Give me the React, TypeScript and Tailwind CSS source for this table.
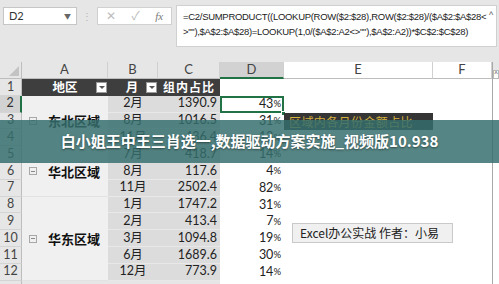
const rows = [
  { n: '2', m: '2月', v: '1390.9', p: '43' },
  { n: '3', m: '8月', v: '1016.5', p: '31' },
  { n: '4', m: '11月', v: '436.4', p: '13' },
  { n: '5', m: '7月', v: '418.7', p: '14' },
  { n: '6', m: '8月', v: '117.6', p: '4' },
  { n: '7', m: '11月', v: '2502.4', p: '82' },
  { n: '8', m: '1月', v: '1747.2', p: '31' },
  { n: '9', m: '2月', v: '413.4', p: '7' },
  { n: '10', m: '3月', v: '1094.8', p: '19' },
  { n: '11', m: '6月', v: '1689.6', p: '30' },
  { n: '12', m: '12月', v: '773.9', p: '14' },
];

const groups = [
  { name: '东北区域', h: 'h-[67.2px]', pt: 'pt-[16.8px]' },
  { name: '华北区域', h: 'h-[33.6px]', pt: 'pt-0' },
  { name: '华东区域', h: 'h-[84px]', pt: 'pt-[33.6px]' },
];

const font = "font-['Lato','Noto_Sans_CJK_SC',sans-serif]";
const cjk = "font-['Noto_Sans_CJK_SC',sans-serif]";

function ColHead({ label, w, active }: { label: string; w: string; active?: boolean }) {
  return (
    <div
      className={`${w} h-[17px] flex items-center justify-center border-r border-[#d0d0d0] text-[13px] text-[#444] ${
        active ? 'bg-[#d2d2d2] border-b-2 border-b-[#217346]' : 'border-b border-b-[#bdbdbd]'
      }`}
    >
      {label}
    </div>
  );
}

function FilterBtn() {
  return (
    <span className="absolute right-[1px] top-[3px] w-[11px] h-[11px] bg-white border border-[#9a9a9a] flex items-center justify-center">
      <span className="w-0 h-0 border-l-[3px] border-r-[3px] border-t-[3px] border-l-transparent border-r-transparent border-t-[#555]" />
    </span>
  );
}

function Minus() {
  return (
    <span className="w-[8px] h-[8px] border border-[#a8a8a8] flex items-center justify-center">
      <span className="w-[4px] h-px bg-[#888]" />
    </span>
  );
}

export default function App() {
  return (
    <div className={`relative w-[499px] h-[284px] overflow-hidden bg-[#e6e6e6] ${font}`}>
      {/* formula bar */}
      <div className="h-[62px] flex items-start pt-[5px] pl-[3px]">
        <div className="mt-[2px] w-[74px] h-[18px] bg-white border border-[#c6c6c6] flex items-center justify-between px-[5px] text-[11px] text-[#333]">
          <span>D2</span>
          <span className="text-[7px] text-[#666]">▼</span>
        </div>
        <div className="w-[20px] h-[22px] flex items-center justify-center text-[10px] text-[#b5b5b5]">⋮</div>
        <div className="mt-[2px] w-[75px] h-[18px] bg-white border border-[#d0d0d0] flex items-center justify-around text-[12px] text-[#bdbdbd]">
          <span>✕</span>
          <span>✓</span>
          <span className="font-['Liberation_Serif',serif] italic text-[#777] text-[11px]">fx</span>
        </div>
        <div className="ml-[4px] w-[321px] h-[42px] bg-white border border-[#d0d0d0] relative pl-[6px] pt-[3px] font-['Liberation_Sans',sans-serif] text-[9.5px] tracking-[-0.3px] leading-[15px] text-[#222]">
          <div>=C2/SUMPRODUCT((LOOKUP(ROW($2:$28),ROW($2:$28)/($A$2:$A$28&lt;</div>
          <div>&gt;""),$A$2:$A$28)=LOOKUP(1,0/($A$2:A2&lt;&gt;""),$A$2:A2))*$C$2:$C$28)</div>
          <span className="absolute right-[3px] top-[2px] text-[9px] text-[#555]">^</span>
        </div>
      </div>

      {/* sheet */}
      <div className="flex">
        {/* row headers */}
        <div className="w-[22px] flex flex-col">
          <div className="h-[17px] relative border-r border-b border-[#bdbdbd]">
            <span className="absolute right-[2px] bottom-[2px] w-0 h-0 border-b-[10px] border-l-[10px] border-b-[#c3c3c3] border-l-transparent" />
          </div>
          {['1', ...rows.map((r) => r.n), ''].map((n) => (
            <div
              key={n}
              className={`h-[16.8px] shrink-0 flex items-center justify-center text-[12.5px] border-b border-[#d4d4d4] ${
                n === '2' ? 'bg-[#d2d2d2] text-[#333] border-r-2 border-r-[#217346]' : 'text-[#444] border-r border-r-[#bdbdbd]'
              }`}
            >
              {n}
            </div>
          ))}
        </div>

        {/* column A */}
        <div className="w-[86px] flex flex-col">
          <ColHead label="A" w="w-[86px]" />
          <div className="h-[16.8px] bg-[#3e3e3e] relative flex items-center justify-center text-white text-[12.5px] font-bold">
            <span className={cjk}>地区</span>
            <FilterBtn />
          </div>
          {groups.map((g) => (
            <div key={g.name} className={`${g.h} ${g.pt} bg-[#f0f0f0] border-b border-[#e2e2e2]`}>
              <div className="h-[16.8px] flex items-center pl-[7px] gap-[11px]">
                <Minus />
                <span className={`${cjk} font-bold text-[13px] text-[#111]`}>{g.name}</span>
              </div>
            </div>
          ))}
        </div>

        {/* column B */}
        <div className="w-[50px] flex flex-col">
          <ColHead label="B" w="w-[50px]" />
          <div className="h-[16.8px] bg-[#3e3e3e] relative flex items-center justify-center text-white text-[12.5px] font-bold">
            <span className={`${cjk} -ml-[2px]`}>月</span>
            <FilterBtn />
          </div>
          {rows.map((r) => (
            <div key={r.n} className="h-[16.8px] shrink-0 bg-[#dcdcdc] border-b border-[#e8e8e8] flex items-center justify-center text-[12.5px] text-[#222]">
              {r.m}
            </div>
          ))}
        </div>

        {/* column C */}
        <div className="w-[62px] flex flex-col">
          <ColHead label="C" w="w-[62px]" />
          <div className="h-[16.8px] bg-[#3e3e3e] flex items-center justify-center text-white text-[12px] font-bold tracking-[1px]">
            <span className={cjk}>组内占比</span>
          </div>
          {rows.map((r) => (
            <div key={r.n} className="h-[16.8px] shrink-0 bg-[#dcdcdc] border-b border-[#e8e8e8] flex items-center justify-end pr-[3px] text-[12.5px] text-[#222]">
              {r.v}
            </div>
          ))}
        </div>

        {/* column D */}
        <div className="w-[64px] flex flex-col bg-white">
          <ColHead label="D" w="w-[64px]" active />
          <div className="h-[16.8px]" />
          {rows.map((r) => (
            <div
              key={r.n}
              className={`h-[16.8px] shrink-0 flex items-center justify-end text-[12.5px] text-[#222] ${
                r.n === '2' ? 'border-2 border-[#217346] pr-[1px]' : 'pr-[3px]'
              }`}
            >
              {r.p}
              <span className="text-[9.5px]">%</span>
            </div>
          ))}
        </div>

        {/* column E */}
        <div className="w-[149px] flex flex-col bg-white">
          <ColHead label="E" w="w-[149px]" />
        </div>

        {/* column F */}
        <div className="w-[59px] flex flex-col bg-white">
          <ColHead label="F" w="w-[59px]" />
        </div>

        {/* scrollbar */}
        <div className="w-[7px] h-[222px] bg-white border-l border-[#a8a8a8] flex flex-col">
          <div className="h-[17px] bg-[#e6e6e6] flex items-end">
            <div className="w-full h-[9px] bg-white border border-[#b8b8b8] text-[7px] leading-[7px] text-center text-[#555]">^</div>
          </div>
        </div>
      </div>

      {/* fill handle */}
      <div className="absolute left-[281px] top-[111px] w-[5px] h-[5px] bg-[#217346] border border-white" />

      {/* dark comment */}
      <div className="absolute left-[284px] top-[113px] w-[149px] h-[17px] bg-[#353535] flex items-center pl-[5px]">
        <span className={`${cjk} text-[12px] tracking-[0.4px] text-[#d4b23c]`}>区域内各月份金额占比</span>
      </div>

      {/* light comment */}
      <div className="absolute left-[292px] top-[223px] w-[161px] h-[20px] bg-[#f0f0f0] border border-[#c9c9c9] flex items-center pl-[7px]">
        <span className={`${cjk} text-[12px] text-[#222]`}>Excel办公实战 作者：小易</span>
      </div>

      {/* banner */}
      <div className="absolute left-0 top-[120px] w-full h-[43px] bg-[rgba(52,110,108,0.84)] flex items-center justify-center">
        <span className={`${cjk} font-bold text-[15px] text-white [text-shadow:0_1px_2px_rgba(0,0,0,0.45)]`}>
          白小姐王中王三肖选一,数据驱动方案实施_视频版10.938
        </span>
      </div>
    </div>
  );
}
